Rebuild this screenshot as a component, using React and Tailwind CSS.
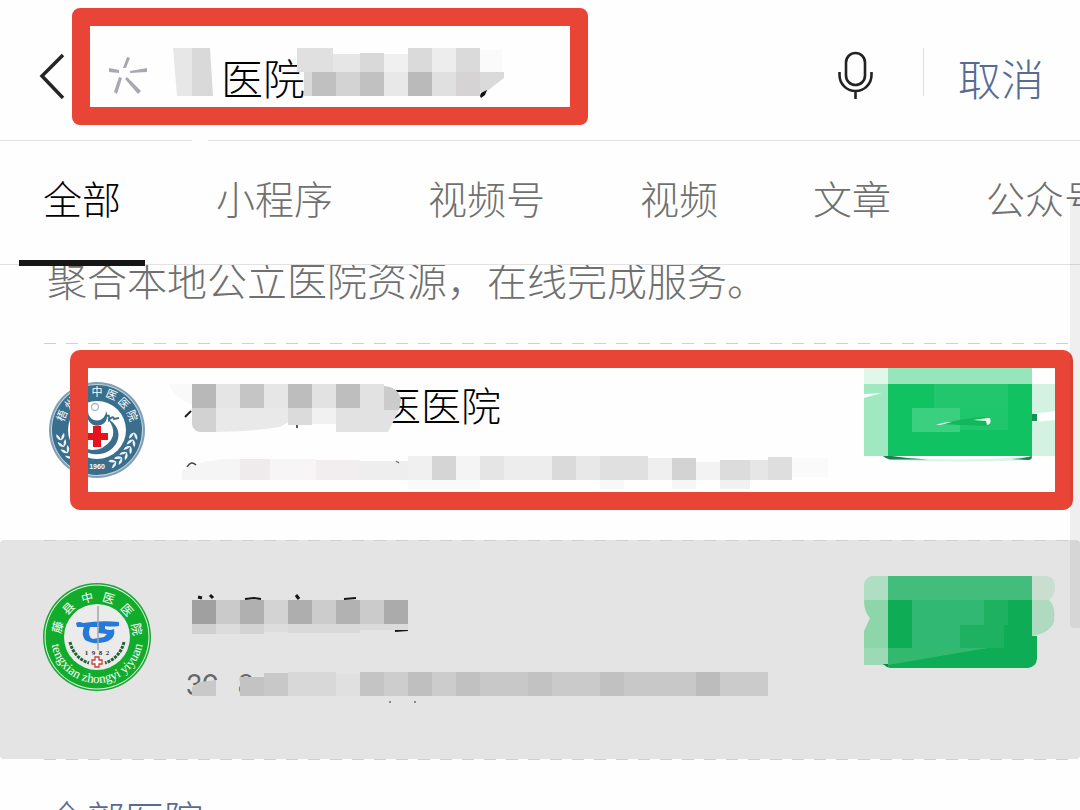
import React from "react";

const TABS = ["全部", "小程序", "视频号", "视频", "文章", "公众号"];

// Each cell is [x, y, width, height, colour].
function Cells({ cells }) {
  return cells.map(([x, y, w, h, fill]) => (
    <rect key={`${x}-${y}`} x={x} y={y} width={w} height={h} fill={fill} />
  ));
}

const SEARCH_CELLS = [
  [297, 48, 36, 24, "#e0e0e0"], [333, 54, 27, 18, "#e6e6e6"], [360, 53, 24, 19, "#d9d9d9"],
  [384, 54, 24, 18, "#f0f0f0"], [408, 48, 24, 24, "#dadada"], [432, 48, 24, 24, "#ededed"],
  [456, 48, 24, 24, "#dadada"], [480, 50, 22, 22, "#fafafa"], [304, 72, 8, 24, "#dadada"],
  [312, 72, 24, 24, "#c0c0c0"], [336, 72, 24, 24, "#d3d3d3"], [360, 72, 24, 24, "#c1c1c1"],
  [384, 72, 24, 24, "#e8e8e8"], [408, 72, 24, 24, "#bababa"], [432, 72, 24, 24, "#e0e0e0"],
  [456, 72, 24, 24, "#d6d3d4"],
];

const FIRST_CELLS = [
  [216, 384, 24, 24, "#e5e5e5"], [240, 384, 24, 24, "#c5c5c5"], [264, 384, 24, 24, "#e6e6e6"],
  [288, 384, 24, 24, "#bdbdbd"], [312, 384, 24, 24, "#e2e2e2"], [336, 384, 24, 24, "#bebebe"],
  [360, 384, 24, 24, "#e2e2e2"], [288, 408, 24, 17, "#dbdbdb"], [312, 408, 24, 16, "#f1f1f1"],
  [240, 459, 30, 21, "#efebed"], [270, 459, 46, 21, "#f8f5f6"], [316, 460, 44, 20, "#f2eef0"],
  [360, 461, 48, 19, "#eeeeee"], [408, 456, 24, 24, "#f0f0f0"], [432, 456, 24, 24, "#d5d5d5"],
  [456, 456, 24, 24, "#f4f4f4"], [480, 456, 24, 24, "#e5e5e5"], [504, 456, 48, 24, "#ededed"],
  [552, 456, 24, 24, "#dadada"], [576, 456, 24, 24, "#e8e8e8"], [600, 456, 48, 24, "#e0e0e0"],
  [648, 458, 24, 22, "#efefef"], [672, 458, 24, 22, "#d3d3d3"], [696, 462, 24, 18, "#f3f3f3"],
  [720, 460, 30, 20, "#dcdcdc"], [750, 460, 18, 20, "#e6e6e6"], [768, 457, 24, 23, "#dedede"],
  [792, 458, 36, 19, "#fafafa"], [408, 480, 72, 9, "#f9fbfa"], [600, 480, 24, 9, "#f7f9f8"],
  [672, 480, 24, 9, "#f5f7f6"], [720, 480, 30, 9, "#eff2f0"],
];

const SECOND_CELLS = [
  [192, 600, 24, 24, "#a0a0a0"], [216, 600, 24, 24, "#cacaca"], [240, 600, 24, 24, "#b0b0b0"],
  [264, 600, 24, 24, "#d3d3d3"], [288, 600, 24, 24, "#aeaeae"], [312, 600, 24, 24, "#cccccc"],
  [336, 600, 24, 24, "#b2b2b2"], [360, 600, 24, 24, "#cbcbcb"], [384, 600, 24, 24, "#ababab"],
  [192, 624, 24, 10, "#d0d0d0"], [216, 624, 24, 10, "#dcdcdc"], [240, 624, 24, 10, "#d3d3d3"],
  [264, 624, 24, 8, "#dddddd"], [288, 624, 72, 9, "#d9d9d9"], [360, 624, 48, 6, "#dbdbdb"],
  [240, 677, 24, 19, "#c3c3c3"], [264, 673, 24, 23, "#c8c8c8"], [288, 672, 48, 24, "#d8d8d8"],
  [336, 674, 24, 22, "#e0e0e0"], [360, 672, 24, 24, "#c4c4c4"], [384, 672, 24, 24, "#cdcdcd"],
  [408, 672, 24, 24, "#bfbfbf"], [432, 672, 24, 24, "#cccccc"], [456, 672, 24, 24, "#c1c1c1"],
  [480, 672, 48, 24, "#c8c8c8"], [528, 672, 24, 24, "#c2c2c2"], [552, 672, 48, 24, "#cacaca"],
  [600, 672, 24, 24, "#c1c1c1"], [624, 672, 72, 24, "#c8c8c8"], [696, 672, 24, 24, "#bcbcbc"],
  [720, 672, 48, 24, "#cbcbcb"],
];

function DashedLine({ className }) {
  return (
    <div
      className={`h-px bg-[repeating-linear-gradient(90deg,#cfcfcf_0_12px,transparent_12px_22px)] ${className}`}
    />
  );
}

function Laurel({ color, scale }) {
  const angles = [100, 111, 122, 133, 144, 155];
  return [1, -1].map((side) =>
    angles.map((a) => {
      const rad = (a * Math.PI) / 180;
      const x = side * scale * Math.sin(rad);
      const y = -scale * Math.cos(rad);
      return (
        <path
          key={`${side}${a}`}
          d="M0 4 Q-5 2 -4 -3 Q-1 -1 0 3 Q1 -1 4 -3 Q5 2 0 4"
          fill={color}
          transform={`translate(${x} ${y}) rotate(${side * (a + 90) + 90 - side * 90})`}
        />
      );
    })
  );
}

function BlueLogo() {
  return (
    <svg viewBox="-49 -49 98 98" className="h-[98px] w-[98px]" aria-hidden="true">
      <defs>
        <path id="blue-arc" d="M-33 8 A34 34 0 1 1 33 8" />
      </defs>
      <circle r="48" fill="#7fa0b5" />
      <circle r="46" fill="#c3d3dd" />
      <circle r="45" fill="#396f8d" />
      <circle r="29" fill="#ffffff" />
      <Laurel color="#edf4f7" scale={37} />
      <path d="M-22 8 A22 20 0 0 0 21 9 Q24 -3 10 -12 Q20 0 14 10 Q7 20 -5 20 Q-16 19 -22 8Z" fill="#396f8d" />
      <path d="M-9 -18 A10 10 0 1 0 9 -19 A8 8 0 0 1 -9 -18Z" fill="#396f8d" />
      <path d="M6 -9 Q10 -16 12 -14 L12 -10 Q16 -15 17 -11 L22 -12" fill="none" stroke="#396f8d" strokeWidth="1.8" />
      <circle cx="-2" cy="-23" r="3.500" fill="none" stroke="#a9b8c0" strokeWidth="1.300" />
      <path d="M-4 -4 H4 V3 H11 V10 H4 V17 H-4 V10 H-11 V3 H-4Z" fill="#e6131f" />
      <text className="fill-white font-['Noto_Sans_CJK_SC',sans-serif] text-[11px] font-normal">
        <textPath href="#blue-arc" startOffset="50%" textAnchor="middle">
          梧 州 市 中 医 医 院
        </textPath>
      </text>
      <text y="39" textAnchor="middle" className="fill-white font-['Liberation_Sans',sans-serif] text-[7px] font-bold">
        1960
      </text>
    </svg>
  );
}

function GreenLogo() {
  const ring = ["藤", "县", "中", "医", "医", "院"];
  return (
    <svg viewBox="-54 -54 108 108" className="h-[108px] w-[108px]" aria-hidden="true">
      <defs>
        <path id="green-low" d="M-46 0 A46 46 0 0 0 46 0" />
      </defs>
      <circle r="54" fill="#1aa830" />
      <circle r="52.5" fill="#e9f5ea" />
      <circle r="51.5" fill="#12ac2c" />
      <circle r="33" fill="#ebebeb" />
      {ring.map((c, i) => (
        <text
          key={i}
          y="-36"
          textAnchor="middle"
          transform={`rotate(${-76 + i * 31})`}
          className="fill-white font-['Noto_Sans_CJK_SC',sans-serif] text-[12px] font-normal"
        >
          {c}
        </text>
      ))}
      <text className="fill-white font-['Liberation_Serif',serif] text-[13px] font-normal">
        <textPath href="#green-low" startOffset="50%" textAnchor="middle">
          tengxian zhongyi yiyuan
        </textPath>
      </text>
      <path
        d="M-21 -14 Q-18 -16 -14 -14 Q4 -17 22 -15 L22 -11 Q14 -10 8 -11 L8 -8 Q13 -6 17 -8 Q19 2 8 5 Q-4 8 -12 3 Q-16 -3 -13 -10 L-20 -10Z M-7 -10 Q-10 0 -4 2 L7 0 L10 -3 L1 -4 L2 -10Z"
        fill="#2579d8"
        fillRule="evenodd"
      />
      <path d="M1 -31 V13" stroke="#a4a4a4" strokeWidth="1.5" />
      <text y="18" textAnchor="middle" className="fill-[#333] font-['Liberation_Serif',serif] text-[7px] font-bold" xmlSpace="preserve">
        1  9  8  2
      </text>
      <g fill="none" stroke="#226034" strokeWidth="3" strokeDasharray="3 1">
        <path d="M-27 5 Q-23 21 -8 26" />
        <path d="M27 5 Q23 21 8 26" />
      </g>
      <path d="M-2 20 H2 V23 H5 V27 H2 V30 H-2 V27 H-5 V23 H-2Z" fill="#ffffff" stroke="#d33b3b" strokeWidth="1.3" />
    </svg>
  );
}

function FirstAction() {
  return (
    <svg viewBox="864 366 192 98" className="h-[98px] w-[192px]" aria-hidden="true">
      <path d="M864 368H888V456H864Z" fill="#a0e8c0" />
      <path d="M864 368H888V384H864Z" fill="#e0f7e9" />
      <path d="M864 394L882 393L864 398Z" fill="#f2fbf6" />
      <path d="M1032 384H1056V456H1032Z" fill="#d3f2e1" />
      <path d="M1032 414L1056 411V420L1032 422Z" fill="#ffffff" />
      <path d="M884 456Q960 463 1032 456V459Q1031 460 1028 460Q960 463 888 460Z" fill="#d9f5e5" />
      <path d="M883 456H892Q910 459 928 459.500H890Q886 459 883 456Z" fill="#17824d" />
      <path d="M1012 459Q1026 458 1032 456Q1032 460 1028 460Z" fill="#17824d" />
      <path d="M888 384H1032V456H888Z" fill="#10c262" />
      <path d="M888 368H1032V384H888Z" fill="#97e5ba" />
      <path d="M934 384H1008V408H934Z" fill="#22c76d" />
      <path d="M912 408H960V432H912Z" fill="#3bcf80" />
      <path d="M960 408H1008V430H960Z" fill="#20c66b" />
      <path d="M940 424Q965 418 985 417L988 426L960 425Z" fill="#12b85b" />
      <path d="M936 425Q943 422 952 422L940 425Z M973 420L988 418H990Q992 424 987 425L986 421Z" fill="#effcf4" />
      <path d="M1032 414H1037V421H1032Z" fill="#169351" />
    </svg>
  );
}

function SecondAction() {
  return (
    <svg viewBox="864 574 192 96" className="h-[96px] w-[192px]" aria-hidden="true">
      <path d="M871 576H888V600H864V583Q866 578 871 576Z" fill="#afdfc3" />
      <path d="M864 600H888V665H864V631L870 618Q864 612 864 600Z" fill="#8cd6aa" />
      <path d="M864 648H888V665H864Z" fill="#9bdab5" />
      <path d="M1032 576H1047Q1056 578 1055 589Q1054 596 1049 600H1032Z" fill="#c9ded1" />
      <path d="M1032 600H1049Q1056 606 1054 622Q1050 633 1032 636Z" fill="#b0dac0" />
      <path d="M888 600H1032V636H1037V659Q1036 667 1028 668H890Q886 667 883 664H888Z" fill="#0dac55" />
      <path d="M888 576H1032V600H888Z" fill="#43bd7c" />
      <path d="M912 600H984V625H960V648H912Z" fill="#31b872" />
      <path d="M984 600H1008V625H984Z M960 625H1004V648H960Z" fill="#1fb162" />
      <path d="M888 648H988L888 665Z" fill="#32b86f" />
      <path d="M883 664H888V667Z" fill="#267a4b" />
    </svg>
  );
}

export default function App() {
  return (
    <div className="relative flex h-screen flex-col overflow-hidden bg-[#fefefe] font-['Noto_Sans_CJK_SC',sans-serif] font-light text-[#191919]">
      <header className="flex h-[140px] shrink-0 items-start pr-9">
        <button aria-label="返回" className="mt-12 flex h-14 w-[72px] items-center justify-end pr-[6px]">
          <svg viewBox="0 0 28 46" className="h-[46px] w-7" fill="none" stroke="#252525" strokeWidth="3.500">
            <path d="M25 2L4 23L25 45" />
          </svg>
        </button>
        <form className="relative mt-2 flex h-[117px] w-[516px] rounded-lg border-[18px] border-[#e94537]">
          <svg viewBox="90 26 480 82" className="absolute left-0 top-0 h-[82px] w-[480px]" aria-hidden="true">
            <g fill="#aaa6b4">
              <path d="M109 68L119 70V73L109 72Z" />
              <path d="M127 57L130 58L126 68H123Z" />
              <path d="M130 71L147 68V72L130 73Z" />
              <path d="M119 77L122 78L117 94L114 92Z" />
              <path d="M127 77L141 91L138 94L125 79Z" />
            </g>
            <path d="M173 48H192V96H177Z" fill="#e7e7e7" />
            <path d="M192 48H210L213 96H192Z" fill="#d9d9d9" />
          </svg>
          <input
            aria-label="搜索"
            defaultValue="医院"
            className="w-full bg-transparent pl-[131px] pt-5 text-[42px] font-light text-black outline-none"
          />
          <svg viewBox="90 26 480 82" className="pointer-events-none absolute left-0 top-0 h-[82px] w-[480px]" aria-hidden="true">
            <Cells cells={SEARCH_CELLS} />
            <path d="M480 72H504V78L486 92H480Z" fill="#dadada" />
            <path d="M480 96L481 93L487 90L485 95L481 98Z" fill="#111" />
          </svg>
        </form>
        <button aria-label="语音输入" className="ml-auto mt-12">
          <svg viewBox="835 48 40 54" className="h-[54px] w-10" fill="none" stroke="#222" strokeWidth="2.600">
            <rect x="846" y="53" width="19" height="32" rx="9.500" />
            <path d="M839.500 72V75A16 16 0 0 0 871.500 75V72M855.500 91V99" />
          </svg>
        </button>
        <div className="ml-12 mt-12 h-12 w-px bg-[#dedede]" />
        <button className="ml-[34px] mt-12 text-[43px] leading-[58px] text-[#576b95]">取消</button>
      </header>
      <div className="flex shrink-0 gap-4">
        <div className="h-px w-48 bg-[#e2e2e2]" />
        <div className="h-px flex-1 bg-[#e2e2e2]" />
      </div>

      <nav className="relative z-10 flex h-[124px] shrink-0 gap-[47px] border-b border-[#e2e2e2] pl-[19px]">
        {TABS.map((tab, i) => (
          <button
            key={tab}
            className={
              i === 0
                ? "-mb-[2px] shrink-0 border-b-6 border-[#161616] px-6 pb-2 text-[39px] leading-[112px] text-black"
                : "-mb-[2px] shrink-0 border-b-6 border-transparent px-6 pb-2 text-[39px] leading-[112px] text-[#707070]"
            }
          >
            {tab}
          </button>
        ))}
      </nav>

      <main className="min-h-0 flex-1 overflow-hidden">
        <p className="pl-[47px] text-[40px] leading-7 text-[#707070]">聚合本地公立医院资源，在线完成服务。</p>
        <DashedLine className="ml-11 mr-2.5 mt-[50px]" />
        <ul>
          <li className="relative flex h-[196px] items-start pl-[43px] pr-6">
            <div className="flex w-[108px] justify-center pt-[37px]">
              <BlueLogo />
            </div>
            <div className="relative ml-[19px] h-full flex-1">
              <h2 className="pl-[211px] pt-10 text-[40px] leading-10 text-black">医医院</h2>
              <svg viewBox="170 344 694 196" className="absolute left-0 top-0 h-[196px] w-[694px]" aria-hidden="true">
                <path d="M168 384H192V404Q176 400 168 384Z" fill="#f9f9f9" />
                <path d="M192 408H312L280 427Q250 432 200 432Q193 430 192 424Z" fill="#e9e9e9" />
                <path d="M336 408H400Q394 420 388 432H336Z" fill="#e2e2e2" />
                <path d="M192 384H216V408H192Z" fill="#b8b8b8" />
                <path d="M192 408H216V432H200Q193 431 192 424Z" fill="#d2d2d2" />
                <path d="M384 386Q399 387 401 400L399 410H384Z" fill="#cbcbcb" />
                <path d="M182 480V470Q210 457 240 459V480Z" fill="#f6f5f5" />
                <Cells cells={FIRST_CELLS} />
                <path d="M185 417L191 411" stroke="#222" strokeWidth="2" />
                <path d="M297 425V428" stroke="#222" strokeWidth="1.500" />
                <path d="M187 467Q191 460 196 465" fill="none" stroke="#444" strokeWidth="1.500" />
                <path d="M396 461L399 463" stroke="#777" strokeWidth="1.500" />
              </svg>
            </div>
            <button aria-label="进入" className="mt-[22px]">
              <FirstAction />
            </button>
            <div className="pointer-events-none absolute bottom-[30px] left-[70px] right-[7px] top-[6px] rounded-[10px] border-[18px] border-[#e94537]" />
          </li>
          <li className="rounded-sm bg-[#e4e4e4]">
            <DashedLine className="ml-11 mr-2.5" />
            <div className="flex h-[218px] items-start pl-[43px] pr-6">
              <div className="w-[108px] pt-[42px]">
                <GreenLogo />
              </div>
              <div className="relative ml-[19px] h-full flex-1">
                <p className="pl-4 pt-[125px] font-['Lato',sans-serif] text-[28px] leading-9 font-normal text-[#666]">
                  30 <span className="pl-3">8</span>
                </p>
                <svg viewBox="170 541 694 218" className="absolute left-0 top-0 h-[218px] w-[694px]" aria-hidden="true">
                  <path d="M192 696V687L200 682L216 680V696Z" fill="#c9c9c9" />
                  <path d="M216 680H222V696H216Z" fill="#e4e4e4" />
                  <g fill="none" stroke="#151515" strokeWidth="3">
                    <path d="M198 597L202 598M210 595L213 598M296 595L299 599" />
                    <path d="M245 599L254 598L261 599M344 599L356 598M395 631L408 630" strokeWidth="2" />
                  </g>
                  <Cells cells={SECOND_CELLS} />
                  <path d="M389 702H391M414 702H416" stroke="#888" strokeWidth="2" />
                </svg>
              </div>
              <button aria-label="进入" className="mt-[33px]">
                <SecondAction />
              </button>
            </div>
          </li>
        </ul>
        <DashedLine className="ml-11 mr-2.5" />
        <a href="#all" className="ml-[47px] mt-[30px] block w-fit text-[39px] leading-[54px] text-[#576b95]">
          全部医院
        </a>
      </main>
      <div className="pointer-events-none absolute right-0 top-[198px] z-20 h-[430px] w-2.5 rounded-l-sm bg-black/6" />
    </div>
  );
}
